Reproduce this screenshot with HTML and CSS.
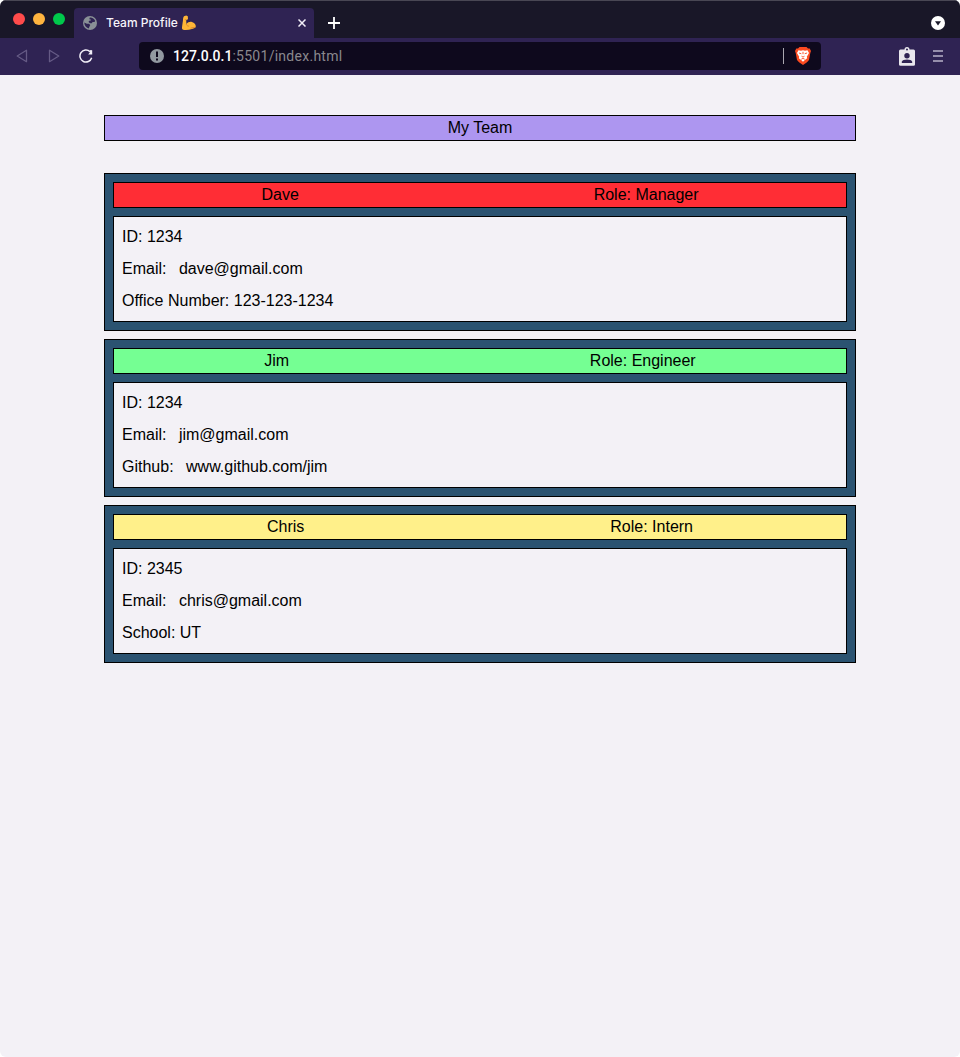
FILE: index.html
```html
<!DOCTYPE html>
<html lang="en">
<head>
<meta charset="utf-8">
<title>Team Profile</title>
<link rel="stylesheet" href="styles.css">
</head>
<body>
<div class="window">
  <header class="tabs">
    <div class="lights"><i class="light red"></i><i class="light amber"></i><i class="light green"></i></div>
    <div class="tab">
      <svg class="globe" width="14" height="14" viewBox="0 0 14 14"><circle cx="7" cy="7" r="7" fill="#899096"/><path d="M6.800 1.400c2.400-.2 4.600 1.300 5.400 3.500L11.400 6H9.600l-.8 1.200H6.900L5.600 6l.4-1.300h1.600V3.200H6.300zM1.300 6.600l2.600 1.100h2l1.400 1.400-.7 1.200-.9 2.100C3.100 11.900 1.300 9.500 1.300 6.600z" fill="#2f2353"/></svg>
      <span class="tab-title">Team Profile</span>
      <svg class="arm" width="16" height="16" viewBox="0 0 16 16"><path d="M3 1.300 5.200.5 6.800 1.300 7 4.200 5.200 5 5.400 9C6.800 7.300 8.900 6.500 10.900 7c2.500.6 4 2.500 3.900 4.600-.1 1.500-1.600 2-3.800 2.400-3 .9-6.300 1.400-8.900.7C.8 14.200.9 12.900 1.100 11.500c.3-2.700.7-4.500.9-6.500C2.100 3.500 2.300 2 3 1.300z" fill="#ffb636"/><path d="M5.200 9.200c.6 1.300 1.500 1.900 2.700 2M3.800 4.600l1.500.3M9.500 13.100l4.500-.8" fill="none" stroke="#d8842b" stroke-width=".9"/></svg>
      <svg class="close" width="8" height="8" viewBox="0 0 8 8"><path d="m.5.5 7 7m0-7-7 7" stroke="#f1eef7" stroke-width="1.500"/></svg>
    </div>
    <svg class="plus" width="12" height="12" viewBox="0 0 12 12"><path d="M6 0v12M0 6h12" stroke="#fff" stroke-width="1.800"/></svg>
    <svg class="search-tabs" width="14" height="14" viewBox="0 0 14 14"><circle cx="7" cy="7" r="7" fill="#fff"/><path d="M4 5.200h6L7 9.500z" fill="#1a1829"/></svg>
  </header>
  <nav class="toolbar">
    <svg class="back" width="12" height="14" viewBox="0 0 12 14"><path d="M10.500 1.300v11.400L1.200 7z" fill="none" stroke="#655a85" stroke-width="1.300" stroke-linejoin="round"/></svg>
    <svg class="forward" width="12" height="14" viewBox="0 0 12 14"><path d="M1.500 1.300v11.400L10.800 7z" fill="none" stroke="#655a85" stroke-width="1.300" stroke-linejoin="round"/></svg>
    <svg class="reload" width="14" height="14" viewBox="0 0 14 14"><path d="M12.700 8.800A6 6 0 1 1 11 2.600" fill="none" stroke="#f1eef7" stroke-width="1.500"/><path d="M9.200 5.500h4V1.200l-2-.2-.5 2.500z" fill="#f1eef7"/></svg>
    <div class="address">
      <svg class="info" width="14" height="14" viewBox="0 0 14 14"><circle cx="7" cy="7" r="7" fill="#9299a0"/><path d="M6 2.500h2v5.500H6zM6 9.400h2v2H6z" fill="#0e091d"/></svg>
      <span class="url"><b>127.0.0.1</b>:5501/index.html</span>
      <i class="divider"></i>
      <svg class="lion" width="16" height="18" viewBox="0 0 16 18"><path d="M4.500 0h7l1.500 1.500 1.700.1L16 4l-.7 2-1.300 7-2 2.300L8 18l-4-2.700L2 13 .7 6 0 4l1.300-2.400L3 1.500z" fill="#fb4a20"/><path d="m3.500 3.200 2.500.5 2-.4 2 .4 2.500-.5L14 6l-2.200 3.700.4 1.500-2.300 1.800L8 14.700 6.100 13l-2.300-1.800.4-1.500L2 6z" fill="#fff"/><path d="m3.900 6 2.400.7M12.100 6l-2.400.7M6.500 9.200l1.500.9 1.500-.9M8 4.800v2.400M6.300 12.200l1.700-.8 1.700.8" fill="none" stroke="#fb4a20" stroke-width=".9"/></svg>
    </div>
    <svg class="badge" width="16" height="19" viewBox="0 0 16 19"><path fill-rule="evenodd" d="M1.500 2.500h4a2.500 2.500 0 0 1 5 0h4Q16 2.500 16 4v13.500q0 1.300-1.500 1.300h-13Q0 18.800 0 17.500V4q0-1.500 1.500-1.500zM8 1.600a1 1 0 1 0 0 2 1 1 0 0 0 0-2z" fill="#e9e7ed"/><circle cx="8" cy="8.700" r="2.700" fill="#2f2353"/><path d="M2.800 16v-1.200c.5-3.200 9.900-3.200 10.400 0V16z" fill="#2f2353"/></svg>
    <svg class="menu" width="10" height="12" viewBox="0 0 10 12"><path d="M0 1h10M0 6h10M0 11h10" stroke="#b9b3c9" stroke-width="1.700"/></svg>
  </nav>
  <main class="page">
    <h1 class="team-title">My Team</h1>
    <section class="cards">
      <article class="card">
        <div class="card-head manager"><span>Dave</span><span>Role: Manager</span></div>
        <div class="card-body"><p>ID: 1234</p><p>Email: <a class="link">dave@gmail.com</a></p><p>Office Number: 123-123-1234</p></div>
      </article>
      <article class="card">
        <div class="card-head engineer"><span>Jim</span><span>Role: Engineer</span></div>
        <div class="card-body"><p>ID: 1234</p><p>Email: <a class="link">jim@gmail.com</a></p><p>Github: <a class="link">www.github.com/jim</a></p></div>
      </article>
      <article class="card">
        <div class="card-head intern"><span>Chris</span><span>Role: Intern</span></div>
        <div class="card-body"><p>ID: 2345</p><p>Email: <a class="link">chris@gmail.com</a></p><p>School: UT</p></div>
      </article>
    </section>
  </main>
</div>
</body>
</html>
```
FILE: styles.css
```css
* { box-sizing: border-box; }
html { background: #fff; }
body { margin: 0; font: 16px/24px "Liberation Sans", Arial, sans-serif; color: #000; }
svg { display: block; flex: none; }
.window { height: 1057px; display: flex; flex-direction: column; overflow: hidden; border-radius: 6px; background: #f3f1f6; }

.tabs { height: 38px; flex: none; display: flex; align-items: flex-end; background: #191728; border-top: 1px solid #494754; }
.lights { display: flex; gap: 8px; width: 74px; padding: 0 0 13px 13px; }
.light { width: 12px; height: 12px; border-radius: 50%; }
.red { background: #ff4b4b; }
.amber { background: #ffb43f; }
.green { background: #00c94b; }
.tab { width: 240px; height: 30px; display: flex; align-items: center; padding: 0 8px 0 9px; background: #2f2353; border-radius: 4px 4px 0 0; }
.tab-title { margin-left: 9px; width: 74px; font: 500 12px/16px Inter, sans-serif; color: #f7f5fb; white-space: nowrap; }
.arm { margin-left: 1px; }
.close { margin-left: auto; }
.plus { margin: 0 0 9px 14px; }
.search-tabs { margin: 0 15px 8px auto; }

.toolbar { height: 37px; flex: none; display: flex; align-items: center; padding: 0 17px 1px 16px; background: #2f2353; }
.forward { margin-left: 20px; }
.reload { margin-left: 19px; }
.address { width: 682px; height: 28px; margin-left: 46px; display: flex; align-items: center; padding: 0 10px 0 11px; background: #0e091d; border-radius: 4px; }
.url { margin-left: 9px; font: 14px/20px Roboto, sans-serif; letter-spacing: .27px; color: #8a888e; }
.url b { font-weight: 500; letter-spacing: 0; color: #fff; }
.divider { width: 1px; height: 16px; margin: 0 11px 0 auto; background: #aaa7b0; }
.badge { margin-left: 78px; }
.menu { margin-left: auto; }

.page { padding: 40px 104px; }
.team-title { margin: 0 0 32px; font: inherit; text-align: center; background: #ad96f0; border: 1px solid #000; }
.cards { display: grid; gap: 8px; }
.card { display: grid; gap: 8px; padding: 8px; background: #2b5371; border: 1px solid #000; }
.card-head { display: flex; justify-content: space-around; border: 1px solid #000; }
.manager { background: #ff2d35; }
.engineer { background: #75ff93; }
.intern { background: #fff08a; }
.card-body { display: grid; gap: 8px; padding: 8px; background: #f3f1f6; border: 1px solid #000; }
.card-body p { margin: 0; }
.link { padding-left: 8px; }
```
